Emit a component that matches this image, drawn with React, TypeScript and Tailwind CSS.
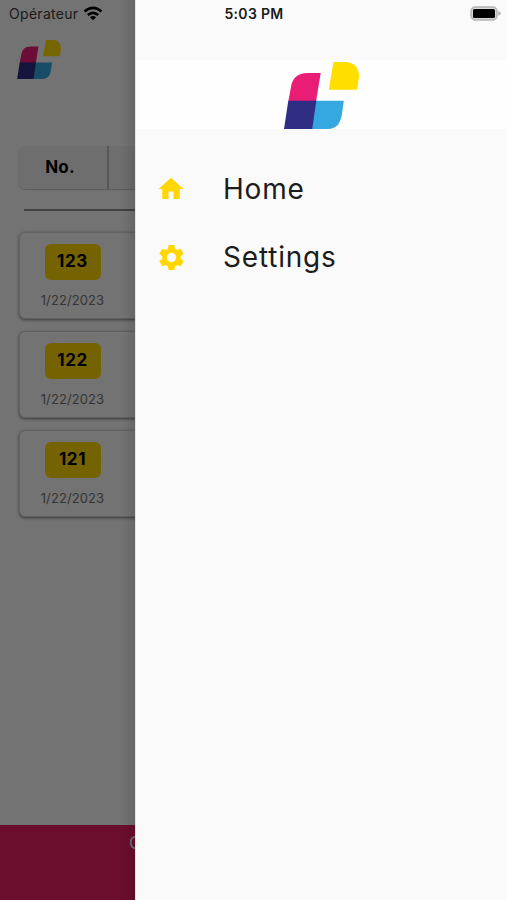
import React from 'react';

interface Order {
  id: number;
  date: string;
}

const orders: Order[] = [
  { id: 123, date: '1/22/2023' },
  { id: 122, date: '1/22/2023' },
  { id: 121, date: '1/22/2023' },
];

const Logo: React.FC<{ className?: string }> = ({ className }) => (
  <svg viewBox="0 0 75 67" className={className}>
    <path d="M36.7 11H23C14 11 8.5 16 7 25L4.3 39.5H32Z" fill="#ea1d76" />
    <path d="M32 38.8H59.8L57.8 53C56 62 52 67 44 67H27.5Z" fill="#35a8e0" />
    <path d="M4.3 38.8H32.4L28.2 67H0Z" fill="#2e2d83" />
    <path d="M49.4 0H61C70 0 75 5.5 75 14Q75 17 72.9 27.8H44.8Z" fill="#ffde00" />
  </svg>
);

const HomeIcon = () => (
  <svg viewBox="0 0 24 24" className="w-[30px] h-[30px]" fill="#ffd600">
    <path d="M10 20v-6h4v6h5v-8h3L12 3 2 12h3v8z" />
  </svg>
);

const SettingsIcon = () => (
  <svg viewBox="0 0 24 24" className="w-[31px] h-[31px] -mr-px" fill="#ffd600">
    <path d="M19.14 12.94c.04-.3.06-.61.06-.94 0-.32-.02-.64-.07-.94l2.03-1.58c.18-.14.23-.41.12-.61l-1.92-3.32c-.12-.22-.37-.29-.59-.22l-2.39.96c-.5-.38-1.03-.7-1.62-.94l-.36-2.54c-.04-.24-.24-.41-.48-.41h-3.84c-.24 0-.43.17-.47.41l-.36 2.54c-.59.24-1.13.57-1.62.94l-2.39-.96c-.22-.08-.47 0-.59.22L2.74 8.87c-.12.21-.08.47.12.61l2.03 1.58c-.05.3-.09.63-.09.94s.02.64.07.94l-2.03 1.58c-.18.14-.23.41-.12.61l1.92 3.32c.12.22.37.29.59.22l2.39-.96c.5.38 1.03.7 1.62.94l.36 2.54c.05.24.24.41.48.41h3.84c.24 0 .44-.17.47-.41l.36-2.54c.59-.24 1.13-.56 1.62-.94l2.39.96c.22.08.47 0 .59-.22l1.92-3.32c.12-.22.07-.47-.12-.61l-2.01-1.58zM12 15.6c-1.98 0-3.6-1.62-3.6-3.6s1.62-3.6 3.6-3.6 3.6 1.62 3.6 3.6-1.62 3.6-3.6 3.6z" />
  </svg>
);

const WifiIcon = () => (
  <svg viewBox="0 0 20 15" className="w-5 h-[15px]" fill="none" stroke="#000" strokeWidth="2.6">
    <path d="M1.5 5.4Q10 -1.6 18.5 5.4" />
    <path d="M4.8 9Q10 4.6 15.2 9" />
    <path d="M10 14.2L6.9 11.2Q10 8.8 13.1 11.2Z" fill="#000" stroke="none" />
  </svg>
);

const BatteryIcon = () => (
  <svg viewBox="0 0 32 15" className="w-8 h-[15px]">
    <rect x="1.2" y="1.2" width="25.6" height="12.6" rx="3.8" fill="#dcdcdc" stroke="#b8b8b8" strokeWidth="1.8" />
    <rect x="3" y="3" width="22" height="9" rx="1.6" fill="#000" />
    <path d="M28.2 5Q31 6 31 7.4T28.2 9.8Z" fill="#b8b8b8" />
  </svg>
);

const OrderCard: React.FC<{ order: Order }> = ({ order }) => (
  <div className="w-[470px] h-[87px] rounded-md border border-[#d4d4d4] bg-[#fafafa] shadow-[0_1px_3px_rgba(0,0,0,0.5)]">
    <div className="w-[105px] flex flex-col items-center pt-[11px]">
      <span className="w-[56px] h-[36px] flex items-center justify-center rounded-md bg-[#ffd600] text-[17px] font-bold tracking-[0.6px] text-black">
        {order.id}
      </span>
      <span className="mt-[10px] text-[13px] leading-5 tracking-[0.1px] text-[#757575]">{order.date}</span>
    </div>
  </div>
);

const OrdersPage = () => (
  <main className="w-[135px] shrink-0 h-full relative overflow-hidden bg-[#fafafa] flex flex-col">
    <div className="h-[28px] shrink-0" />
    <Logo className="w-[44px] h-[39px] ml-[17px] mt-3 shrink-0" />

    {/* Table header */}
    <div className="ml-[18px] mt-[67px] w-[470px] h-[43px] shrink-0 flex rounded-lg bg-[#f0f0f0] shadow-[0_1px_1px_rgba(0,0,0,0.2)]">
      <div className="w-[91px] border-r-2 border-[#bdbdbd] flex items-center justify-center pr-[5px] text-[17px] font-bold tracking-[0.1px]">
        No.
      </div>
    </div>
    <hr className="ml-6 mt-[20px] w-[460px] shrink-0 border-0 h-[2px] bg-[#909090]" />

    <div className="ml-[19px] mt-[21px] flex flex-col gap-3">
      {orders.map((order) => (
        <OrderCard key={order.id} order={order} />
      ))}
    </div>

    <footer className="mt-auto h-[75px] w-[507px] shrink-0 bg-[#e91e63] pl-[129px] pt-[7px] text-[17px] leading-[22px] text-white">
      C
    </footer>

    {/* Scrim and drawer shadow */}
    <div className="absolute inset-0 bg-black/54" />
    <div className="absolute inset-y-0 right-0 w-[14px] bg-linear-to-r from-transparent to-black/12" />
  </main>
);

const Drawer = () => (
  <aside className="flex-1 h-full bg-[#fafafa] border-l border-[#e4e4e4] pt-[60px]">
    <div className="h-[69px] bg-[#fefefe] flex justify-center">
      <Logo className="w-[75px] h-[67px] mt-[2px]" />
    </div>
    <nav className="pt-[26px]">
      <a className="h-[68px] flex items-center pl-5 text-[28px] tracking-[0.8px] text-[#1c1c1c]">
        <HomeIcon />
        <span className="ml-[37px]">Home</span>
      </a>
      <a className="h-[68px] flex items-center pl-5 text-[28px] tracking-[0.8px] text-[#1c1c1c]">
        <SettingsIcon />
        <span className="ml-[37px]">Settings</span>
      </a>
    </nav>
  </aside>
);

const App = () => (
  <div className="relative w-[507px] h-[900px] overflow-hidden flex font-['Inter',sans-serif]">
    <OrdersPage />
    <Drawer />

    {/* Status bar lies over both the page and the drawer */}
    <div className="absolute inset-x-0 top-0 h-[26px] grid grid-cols-3 items-center pl-[9px] pr-[5px] text-[14px] text-[#1a1a1a]">
      <div className="flex items-center gap-[5px]">
        <span className="tracking-[0.3px]">Opérateur</span>
        <WifiIcon />
      </div>
      <span className="-ml-[3px] text-center font-semibold tracking-[0.3px]">5:03 PM</span>
      <div className="flex justify-end">
        <BatteryIcon />
      </div>
    </div>
  </div>
);

export default App;
